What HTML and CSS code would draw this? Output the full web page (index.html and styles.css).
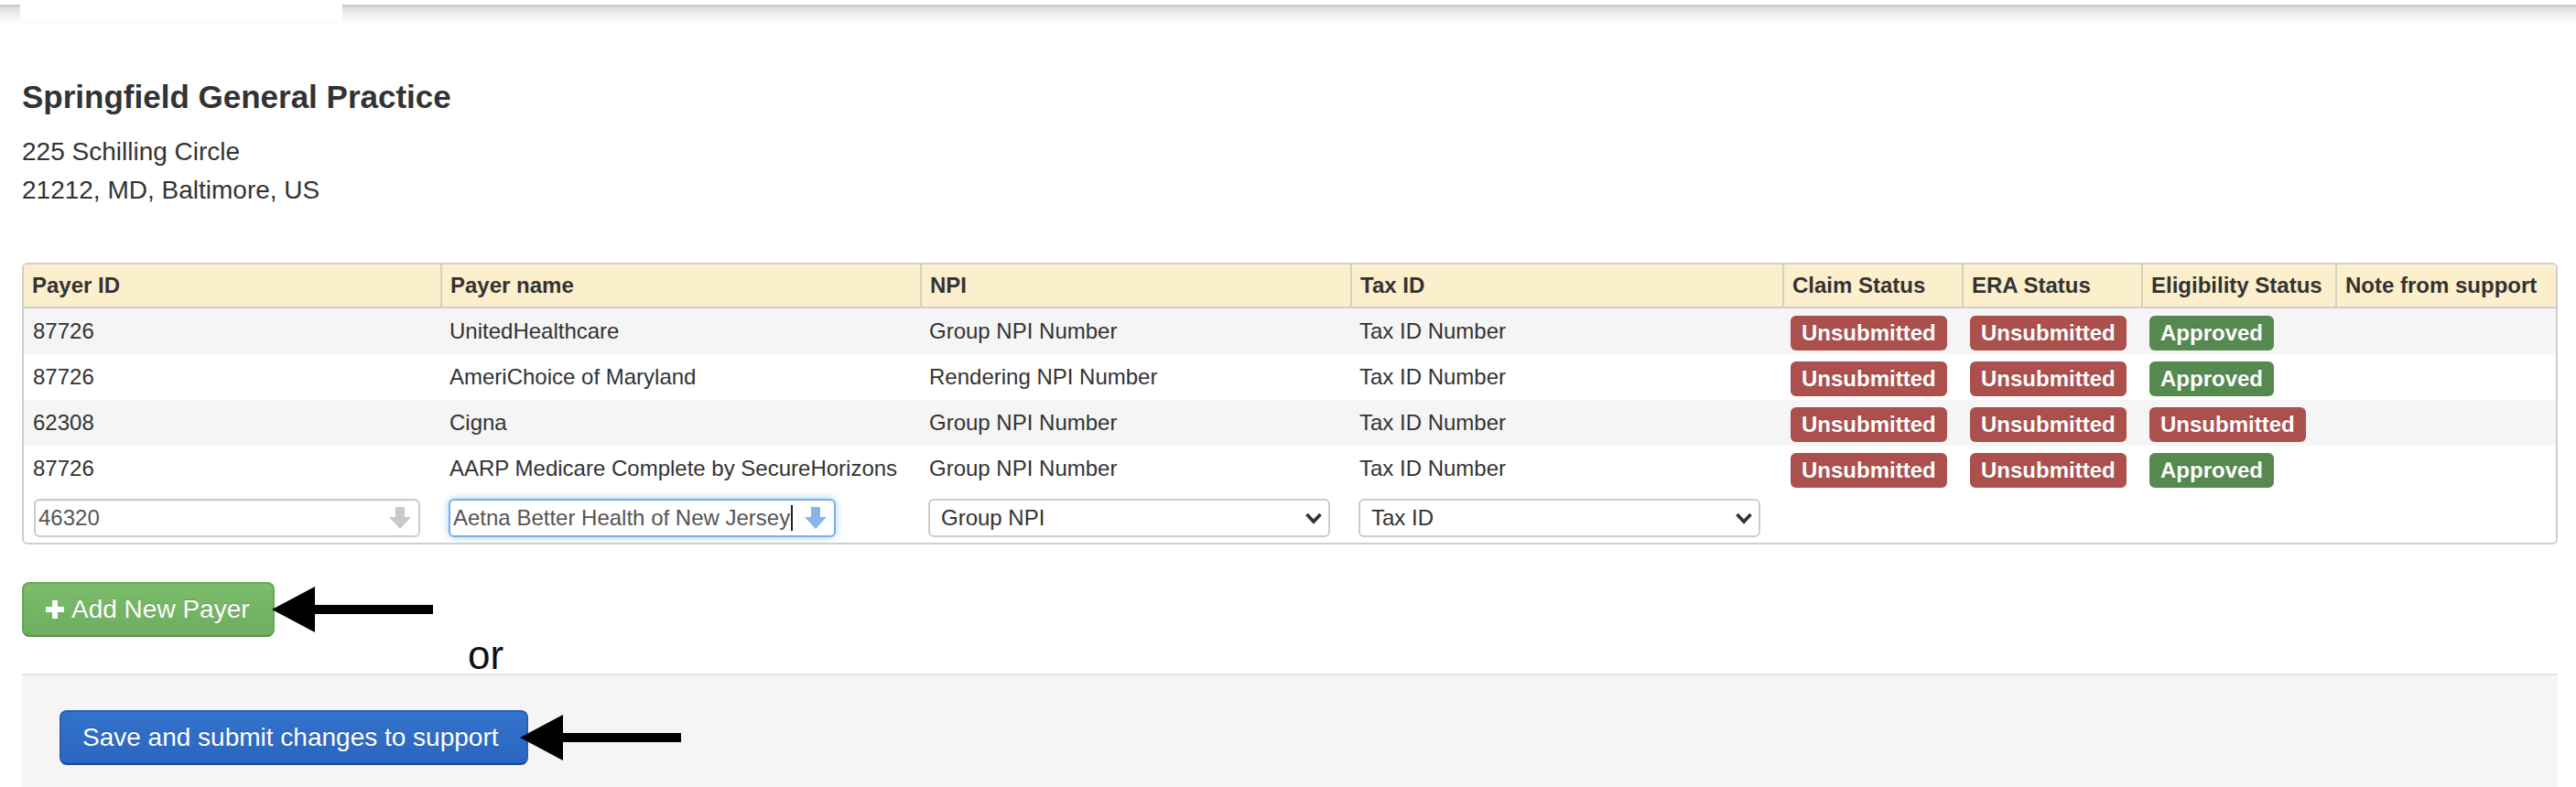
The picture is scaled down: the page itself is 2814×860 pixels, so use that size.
FILE: index.html
```html
<!DOCTYPE html>
<html lang="en">
<head>
<meta charset="utf-8">
<title>Springfield General Practice</title>
<link rel="stylesheet" href="styles.css">
</head>
<body>
<div class="topbar"><div class="tab"></div></div>
<main class="page">
  <h1 class="title">Springfield General Practice</h1>
  <address class="addr">
    <div>225 Schilling Circle</div>
    <div>21212, MD, Baltimore, US</div>
  </address>

  <div class="grid-wrap">
    <table class="grid">
      <colgroup>
        <col class="w-id"><col class="w-name"><col class="w-npi"><col class="w-tax">
        <col class="w-claim"><col class="w-era"><col class="w-elig"><col class="w-note">
      </colgroup>
      <thead>
        <tr>
          <th>Payer ID</th><th>Payer name</th><th>NPI</th><th>Tax ID</th>
          <th>Claim Status</th><th>ERA Status</th><th>Eligibility Status</th><th>Note from support</th>
        </tr>
      </thead>
      <tbody>
        <tr class="odd">
          <td>87726</td><td>UnitedHealthcare</td><td>Group NPI Number</td><td>Tax ID Number</td>
          <td><span class="badge red">Unsubmitted</span></td><td><span class="badge red">Unsubmitted</span></td><td><span class="badge green">Approved</span></td><td></td>
        </tr>
        <tr>
          <td>87726</td><td>AmeriChoice of Maryland</td><td>Rendering NPI Number</td><td>Tax ID Number</td>
          <td><span class="badge red">Unsubmitted</span></td><td><span class="badge red">Unsubmitted</span></td><td><span class="badge green">Approved</span></td><td></td>
        </tr>
        <tr class="odd">
          <td>62308</td><td>Cigna</td><td>Group NPI Number</td><td>Tax ID Number</td>
          <td><span class="badge red">Unsubmitted</span></td><td><span class="badge red">Unsubmitted</span></td><td><span class="badge red">Unsubmitted</span></td><td></td>
        </tr>
        <tr>
          <td>87726</td><td>AARP Medicare Complete by SecureHorizons</td><td>Group NPI Number</td><td>Tax ID Number</td>
          <td><span class="badge red">Unsubmitted</span></td><td><span class="badge red">Unsubmitted</span></td><td><span class="badge green">Approved</span></td><td></td>
        </tr>
        <tr class="edit">
          <td class="first">
            <div class="field f-id">
              <span class="val">46320</span>
              <svg class="down gray" width="26" height="24" viewBox="0 0 26 24"><path d="M8 0h10v11h7L13 24 1 11h7z" fill="currentColor"/></svg>
            </div>
          </td>
          <td>
            <div class="field f-name focus">
              <span class="val">Aetna Better Health of New Jersey<span class="caret"></span></span>
              <svg class="down blue" width="26" height="24" viewBox="0 0 26 24"><path d="M8 0h10v11h7L13 24 1 11h7z" fill="currentColor"/></svg>
            </div>
          </td>
          <td>
            <div class="field sel">
              <span class="val">Group NPI</span>
              <svg class="chev" width="20" height="14" viewBox="0 0 20 14"><path d="M2.5 3l7.5 8 7.5-8" fill="none" stroke="currentColor" stroke-width="3.6"/></svg>
            </div>
          </td>
          <td>
            <div class="field sel">
              <span class="val">Tax ID</span>
              <svg class="chev" width="20" height="14" viewBox="0 0 20 14"><path d="M2.5 3l7.5 8 7.5-8" fill="none" stroke="currentColor" stroke-width="3.6"/></svg>
            </div>
          </td>
          <td></td><td></td><td></td><td></td>
        </tr>
      </tbody>
    </table>
  </div>

  <div class="action-row add-row">
    <button class="btn btn-green" type="button">
      <svg class="plus" width="20" height="20" viewBox="0 0 20 20"><path d="M7 0h6v7h7v6h-7v7H7v-7H0V7h7z" fill="#fff"/></svg>
      <span>Add New Payer</span>
    </button>
    <svg class="arrow a1" width="176" height="50" viewBox="0 0 176 50"><polygon points="0,25 47,0 47,20 176,20 176,30 47,30 47,50" fill="#000"/></svg>
  </div>
  <div class="or">or</div>

  <div class="form-actions">
    <div class="action-row">
      <button class="btn btn-blue" type="button">Save and submit changes to support</button>
      <svg class="arrow a2" width="176" height="50" viewBox="0 0 176 50"><polygon points="0,25 47,0 47,20 176,20 176,30 47,30 47,50" fill="#000"/></svg>
    </div>
  </div>
</main>
</body>
</html>
```

FILE: styles.css
```css
html, body {
  margin: 0;
  padding: 0;
  background: #fff;
}

body {
  font-family: "Liberation Sans", Arial, Helvetica, sans-serif;
  color: #333;
}

.topbar {
  height: 22px;
  padding-left: 22px;
  box-sizing: border-box;
  background: linear-gradient(#c4c4c4, #e4e4e4 5px, #f8f8f8 16px, #fff 22px);
}

.tab {
  margin-top: 5px;
  width: 352px;
  height: 17px;
  background: #fff;
}

.page {
  padding: 0 20px 0 24px;
}

.title {
  margin: 59px 0 0 0;
  font-size: 35px;
  line-height: 40px;
  font-weight: bold;
  color: #333;
}

.addr {
  margin: 19px 0 0 0;
  font-style: normal;
  font-size: 28px;
  line-height: 42px;
  color: #333;
}

.grid-wrap {
  margin-top: 58px;
  border: 2px solid #cfcfcf;
  border-radius: 6px;
  overflow: hidden;
}

.grid {
  width: 100%;
  table-layout: fixed;
  border-collapse: separate;
  border-spacing: 0;
  font-size: 24px;
}

.w-id { width: 455px; }
.w-name { width: 524px; }
.w-npi { width: 470px; }
.w-tax { width: 472px; }
.w-claim { width: 196px; }
.w-era { width: 196px; }
.w-elig { width: 212px; }
.w-note { width: 241px; }

.grid th {
  background: #fcefcb;
  text-align: left;
  font-weight: bold;
  line-height: 46px;
  padding: 0 9px;
  border-bottom: 2px solid #cdcdcd;
  border-left: 2px solid #d9d0b8;
  white-space: nowrap;
  overflow: hidden;
}

.grid th:first-child {
  border-left: none;
}

.grid td {
  line-height: 50px;
  padding: 0 10px;
  white-space: nowrap;
  vertical-align: middle;
}

.grid tr.odd td {
  background: #f5f5f5;
}

.badge {
  display: inline-block;
  vertical-align: middle;
  line-height: 38px;
  padding: 0 12px;
  margin-left: -1px;
  border-radius: 6px;
  color: #fff;
  font-weight: bold;
  font-size: 24px;
  text-shadow: 0 -1px 0 rgba(0, 0, 0, 0.2);
}

.badge.red { background: #ab504c; }
.badge.green { background: #56894f; }

.grid tr.edit td {
  line-height: 1;
  padding: 8px 9px 6px 9px;
}

.grid tr.edit td.first {
  padding-left: 11px;
}

.field {
  box-sizing: border-box;
  height: 42px;
  display: flex;
  align-items: center;
  justify-content: space-between;
  border: 2px solid #cccccc;
  border-radius: 6px;
  background: #fff;
  padding: 0 7px 0 3px;
  font-size: 24px;
  color: #555;
  box-shadow: inset 0 1px 2px rgba(0, 0, 0, 0.06);
}

.f-id { width: 422px; }
.f-name { width: 423px; }

.field.focus {
  border-color: #7cade9;
  box-shadow: 0 0 8px rgba(82, 168, 236, 0.55), inset 0 1px 2px rgba(0, 0, 0, 0.06);
}

.field.sel {
  width: 439px;
  padding: 0 6px 0 12px;
  color: #333;
  box-shadow: none;
}

.val {
  display: flex;
  align-items: center;
}

.caret {
  display: inline-block;
  width: 2px;
  height: 28px;
  background: #222;
  margin-left: 1px;
}

.down.gray { color: #c9c9c9; }
.down.blue { color: #86b5ee; }
.chev { color: #333; }

.action-row {
  display: flex;
  align-items: center;
}

.add-row {
  margin-top: 41px;
}

.btn {
  display: inline-flex;
  align-items: center;
  height: 60px;
  box-sizing: border-box;
  border-radius: 8px;
  font-family: "Liberation Sans", Arial, Helvetica, sans-serif;
  font-size: 28px;
  color: #fff;
  text-shadow: 0 -1px 0 rgba(0, 0, 0, 0.2);
  cursor: pointer;
}

.btn-green {
  width: 276px;
  padding: 0 24px;
  background: linear-gradient(#7bbd6b, #6dae5f);
  border: 2px solid #66a759;
  border-bottom-color: #578f4c;
}

.plus {
  margin-right: 8px;
  flex: none;
}

.btn-blue {
  width: 512px;
  padding: 0 23px;
  background: linear-gradient(#3372cc, #2b66c0);
  border: 2px solid #2a60b3;
  border-bottom-color: #1d4a8d;
}

.arrow { flex: none; }
.a1 { margin-left: -3px; }
.a2 { margin-left: -9px; }

.or {
  padding-left: 487px;
  font-size: 44px;
  line-height: 40px;
  color: #111;
}

.form-actions {
  background: #f5f5f5;
  border-top: 2px solid #e5e5e5;
  padding: 38px 41px 40px 41px;
}
```
